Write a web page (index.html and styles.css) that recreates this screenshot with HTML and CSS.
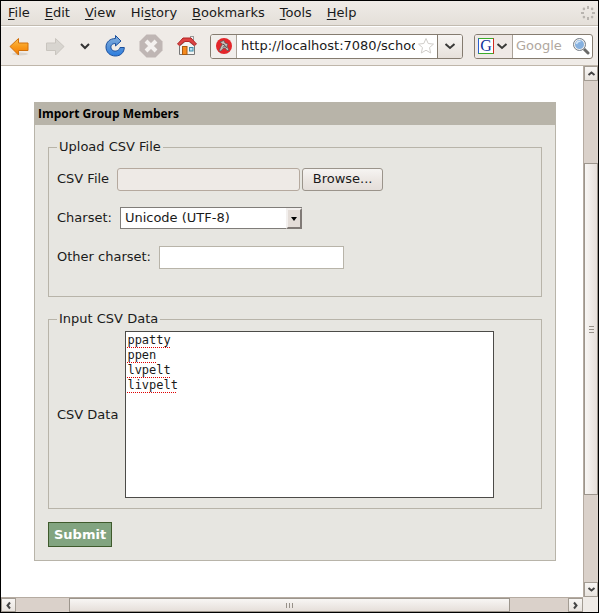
FILE: index.html
```html
<!DOCTYPE html>
<html lang="en">
<head>
<meta charset="utf-8">
<title>Import Group Members</title>
<link rel="stylesheet" href="styles.css">
</head>
<body>
<div class="window">
  <nav class="menubar" aria-label="Menu">
    <a href="#"><u>F</u>ile</a>
    <a href="#"><u>E</u>dit</a>
    <a href="#"><u>V</u>iew</a>
    <a href="#">Hi<u>s</u>tory</a>
    <a href="#"><u>B</u>ookmarks</a>
    <a href="#"><u>T</u>ools</a>
    <a href="#"><u>H</u>elp</a>
    <svg class="throbber" width="16" height="16" viewBox="0 0 16 16" fill="#b8b4af">
      <rect x="7" y="1" width="2" height="3"/><rect x="7" y="12" width="2" height="3"/>
      <rect x="1" y="7" width="3" height="2"/><rect x="12" y="7" width="3" height="2"/>
      <circle cx="3.9" cy="3.9" r="1.3"/><circle cx="12.1" cy="3.9" r="1.3"/>
      <circle cx="3.9" cy="12.1" r="1.3"/><circle cx="12.1" cy="12.1" r="1.3"/>
    </svg>
  </nav>

  <div class="toolbar">
    <button class="tool" type="button" aria-label="Back">
      <svg width="24" height="24" viewBox="0 0 24 24">
        <defs><linearGradient id="or" x2="0" y2="1"><stop offset="0" stop-color="#fcc04d"/><stop offset=".5" stop-color="#f89a1c"/><stop offset="1" stop-color="#f57900"/></linearGradient></defs>
        <ellipse cx="13" cy="20" rx="8" ry="1.5" fill="#d9d4ce"/>
        <path d="M3 12.500 11.500 4.500V9h9.500v7.500h-9.500v4.500z" fill="url(#or)" stroke="#d0700c" stroke-linejoin="round"/>
      </svg>
    </button>
    <button class="tool" type="button" aria-label="Forward">
      <svg width="24" height="24" viewBox="0 0 24 24">
        <path d="M21 12.500 12.500 4.500V9H3.500v7.500h9v4.500z" fill="#d8d5d0" stroke="#c9c5bf" stroke-linejoin="round"/>
      </svg>
    </button>
    <button class="tool tool-narrow" type="button" aria-label="Recent pages">
      <svg width="12" height="12" viewBox="0 0 12 12"><path d="m2 4 4 4 4-4" fill="none" stroke="#333" stroke-width="2"/></svg>
    </button>
    <button class="tool" type="button" aria-label="Reload">
      <svg width="24" height="24" viewBox="0 0 24 24">
        <defs><linearGradient id="bl" x2="0" y2="1"><stop offset="0" stop-color="#86b0dd"/><stop offset=".5" stop-color="#5b95d8"/><stop offset="1" stop-color="#2b7de0"/></linearGradient></defs>
        <path d="M12.500 1.500 18 7l-5.500 5V9.500C9 9.500 7.500 11.500 8 14c.6 2.800 3.800 3.800 6.500 2.500 1.500-.7 2.200-1.800 2.500-3h4.300C21.200 18.500 17.500 22 12.500 22 7 22 3 18.300 3 13c0-5 4-8.500 9.500-8.500z" fill="url(#bl)" stroke="#1b4f9c" stroke-linejoin="round"/>
      </svg>
    </button>
    <button class="tool" type="button" aria-label="Stop">
      <svg width="24" height="24" viewBox="0 0 24 24">
        <path d="M7.500.500h9l7 7v9l-7 7h-9l-7-7v-9z" fill="#bfb6b4"/>
        <path d="m7 7 10 10M17 7 7 17" stroke="#f4f1ef" stroke-width="4"/>
      </svg>
    </button>
    <button class="tool" type="button" aria-label="Home">
      <svg width="24" height="24" viewBox="0 0 24 24">
        <rect x="15.500" y="2.500" width="3" height="6" fill="#eee" stroke="#999"/>
        <path d="M4.500 12v8.500h15V12L12 6z" fill="#f4f4f2" stroke="#777"/>
        <rect x="7.500" y="12.500" width="4.500" height="8" fill="#f58a1d" stroke="#a85a10"/>
        <rect x="14.500" y="13.500" width="3.500" height="3.500" fill="#b5e0ef" stroke="#3b8aa8"/>
        <path d="M2.500 10 8 4h8l5.500 6-2 1.500L14.500 7.500h-5L4.500 11.500z" fill="#dc4343" stroke="#b32626" stroke-linejoin="round"/>
      </svg>
    </button>

    <div class="location">
      <span class="site">
        <svg width="16" height="16" viewBox="0 0 16 16">
          <circle cx="8" cy="8" r="8" fill="#e3262b"/>
          <path d="m4 4 4-1.500 1 2.500 3 1-1 2 2 4.500h-2L9 10l-2 .500L5 13H3l2-4.500L6.500 6z" fill="#c9c1bd" stroke="#555" stroke-width=".7"/>
          <path d="m7 6 2 1.500-2 2M9.500 8l1 2" fill="none" stroke="#444"/>
        </svg>
      </span>
      <input class="url" type="text" aria-label="Address" value="http://localhost:7080/school" spellcheck="false">
      <svg class="star" width="18" height="18" viewBox="0 0 18 18"><path d="m9 1.500 2.200 5 5.300.600-4 3.500 1.200 5.400L9 13.200 4.300 16l1.200-5.400-4-3.500 5.300-.600z" fill="#fff" stroke="#cfccc8" stroke-linejoin="round"/></svg>
      <button class="drop" type="button" aria-label="Show history">
        <svg width="12" height="12" viewBox="0 0 12 12"><path d="m1.500 4 4.500 4 4.500-4" fill="none" stroke="#3a3a38" stroke-width="2"/></svg>
      </button>
    </div>

    <div class="search">
      <button class="engine" type="button" aria-label="Search engine">
        <span class="google">G</span>
        <svg width="12" height="12" viewBox="0 0 12 12"><path d="m1.500 4 4.500 4 4.500-4" fill="none" stroke="#3a3a38" stroke-width="2"/></svg>
      </button>
      <input class="query" type="text" aria-label="Search" placeholder="Google">
      <button class="go" type="button" aria-label="Go">
        <svg width="18" height="18" viewBox="0 0 18 18">
          <path d="m11 11 5 5" stroke="#6a6a68" stroke-width="3" stroke-linecap="round"/>
          <circle cx="7.500" cy="7.500" r="5.500" fill="#86b1e0" stroke="#eee" stroke-width="2"/>
          <circle cx="7.500" cy="7.500" r="6" fill="none" stroke="#777f88"/>
          <path d="M4.500 7c.5-2 2-3 4-2.500" fill="none" stroke="#d5e6f7" stroke-width="1.500"/>
        </svg>
      </button>
    </div>
  </div>

  <div class="viewport">
    <main class="page">
      <form class="card">
        <h1>Import Group Members</h1>
        <div class="card-body">
          <fieldset class="upload">
            <legend>Upload CSV File</legend>
            <div class="row">
              <label for="file">CSV File</label>
              <input class="file" id="file" type="text" readonly>
              <button class="browse" type="button">Browse...</button>
            </div>
            <div class="row">
              <label for="charset">Charset:</label>
              <span class="select">
                <select id="charset"><option>Unicode (UTF-8)</option></select>
                <span class="arrow"></span>
              </span>
            </div>
            <div class="row">
              <label for="other">Other charset:</label>
              <input class="other" id="other" type="text">
            </div>
          </fieldset>
          <fieldset class="data">
            <legend>Input CSV Data</legend>
            <div class="row">
              <label for="csv">CSV Data</label>
              <textarea id="csv" spellcheck="false">ppatty
ppen
lvpelt
livpelt</textarea>
            </div>
          </fieldset>
          <button class="submit" type="submit">Submit</button>
        </div>
      </form>
    </main>
    <div class="bar vertical">
      <button type="button" aria-label="Scroll up"><svg width="9" height="9" viewBox="0 0 9 9"><path d="M1.500 6 4.500 3.500 7.500 6"/></svg></button>
      <span class="before"></span>
      <span class="thumb"><i></i><i></i><i></i></span>
      <span class="after"></span>
      <button type="button" aria-label="Scroll down"><svg width="9" height="9" viewBox="0 0 9 9"><path d="M1.500 3 4.500 5.500 7.500 3"/></svg></button>
    </div>
    <div class="bar horizontal">
      <button type="button" aria-label="Scroll left"><svg width="9" height="9" viewBox="0 0 9 9"><path d="M6 1.500 3.500 4.500 6 7.500"/></svg></button>
      <span class="before"></span>
      <span class="thumb"><i></i><i></i><i></i></span>
      <span class="after"></span>
      <button type="button" aria-label="Scroll right"><svg width="9" height="9" viewBox="0 0 9 9"><path d="M3 1.500 5.500 4.500 3 7.500"/></svg></button>
    </div>
  </div>
</div>
</body>
</html>
```
FILE: styles.css
```css
* {
  box-sizing: border-box;
}

body {
  margin: 0;
  color: #1a1a1a;
  background: #efebe7;
}

body,
button,
input,
select {
  font: 13px/16px "DejaVu Sans", sans-serif;
}

button,
input,
select,
textarea {
  margin: 0;
  padding: 0;
  border: 0;
  border-radius: 0;
  color: inherit;
  outline: 0;
}

svg {
  display: block;
  flex: none;
}

.window {
  display: flex;
  flex-direction: column;
  min-height: 100vh;
  border: 1px solid #000;
}

/* Menu bar */
.menubar {
  display: flex;
  gap: 1px;
  align-items: center;
  height: 25px;
  border-bottom: 1px solid #c2bbb0;
  background: linear-gradient(#efebe7, #e4dfd9);
}

.menubar a {
  padding: 0 7px;
  color: inherit;
  text-decoration: none;
}

.menubar u {
  text-decoration-skip-ink: none;
  text-underline-offset: 2px;
}

.throbber {
  margin-left: auto;
  margin-right: 2px;
}

/* Toolbar */
.toolbar {
  display: flex;
  align-items: center;
  height: 40px;
  padding-right: 5px;
  border-top: 1px solid #fff;
  border-bottom: 1px solid #bfb6aa;
}

.tool {
  display: flex;
  flex: none;
  align-items: center;
  justify-content: center;
  width: 36px;
  height: 32px;
  background: none;
}

.tool-narrow {
  width: 24px;
}

.location,
.search {
  display: flex;
  align-items: center;
  height: 25px;
  border: 1px solid #857c70;
  border-radius: 3px;
  background: #fff;
  overflow: hidden;
}

.location {
  flex: 1;
  min-width: 0;
  margin-left: 5px;
}

.site {
  display: flex;
  flex: none;
  align-items: center;
  justify-content: center;
  width: 26px;
  height: 23px;
  border-right: 1px solid #aaa298;
  background: #f1eeeb;
}

.url {
  flex: 1;
  min-width: 0;
  margin: 0 2px 0 4px;
}

.drop {
  display: flex;
  align-items: center;
  justify-content: center;
  width: 25px;
  height: 23px;
  margin-left: 2px;
  border-left: 1px solid #857c70;
  background: linear-gradient(#f8f6f4, #e6e0da);
}

.search {
  flex: none;
  width: 119px;
  margin-left: 11px;
}

.engine {
  display: flex;
  flex: none;
  gap: 2px;
  align-items: center;
  width: 38px;
  height: 23px;
  padding-left: 3px;
  border-right: 1px solid #aaa298;
  background: #efe9e6;
}

.google {
  width: 16px;
  height: 16px;
  border: 1px solid;
  border-color: #3bab2a #d02a20 #3bab2a #2a5fd0;
  background: #fff;
  color: #10339a;
  font: 16px/14px "Liberation Serif", serif;
  text-align: center;
}

.query {
  flex: 1;
  min-width: 0;
  margin-left: 3px;
}

.query::placeholder {
  color: #b0a79e;
}

.go {
  margin-right: 2px;
  background: none;
}

/* Page area with its scroll bars */
.viewport {
  display: grid;
  flex: 1;
  grid-template-columns: minmax(0, 1fr) 15px;
  grid-template-rows: 1fr 15px;
}

.page {
  padding: 36px 27px 36px 33px;
  background: #fff;
}

.card {
  border: 1px solid #b8b4a9;
  background: #e7e6e1;
}

h1 {
  margin: 0;
  padding: 3px;
  background: #b8b4a9;
  color: #000;
  font: bold 12px/16px "Open Sans", sans-serif;
}

.card-body {
  padding: 14px 13px 13px;
}

fieldset {
  min-width: 0;
  margin: 0 0 14px;
  padding: 0 8px;
  border: 1px solid #b8b4a9;
}

legend {
  padding: 0 2px;
}

.row {
  display: flex;
  gap: 7px;
  align-items: center;
  min-height: 24px;
}

.upload {
  padding-top: 12px;
  padding-bottom: 27px;
}

.upload .row {
  gap: 8px;
}

.upload .row + .row {
  margin-top: 15px;
}

.data {
  margin-bottom: 13px;
  padding-top: 4px;
  padding-bottom: 10px;
}

.file {
  width: 183px;
  height: 23px;
  border: 1px solid #b5a99e;
  border-radius: 3px;
  background: #eeeae6;
}

.browse {
  width: 81px;
  height: 23px;
  margin-left: -6px;
  border: 1px solid #9b948b;
  border-radius: 3px;
  background: linear-gradient(#f6f4f2, #ece7e3 50%, #e4deda);
}

.select {
  position: relative;
  width: 182px;
  height: 22px;
}

.select select {
  width: 100%;
  height: 100%;
  padding: 0 20px 0 4px;
  border: 1px solid #807d79;
  background: #fff;
  appearance: none;
}

.arrow {
  position: absolute;
  top: 1px;
  right: 0;
  display: flex;
  align-items: center;
  justify-content: center;
  width: 16px;
  height: 21px;
  border: 2px solid;
  border-color: #f3f0ee #807a76 #807a76 #f3f0ee;
  background: #e4ddd8;
  pointer-events: none;
}

.arrow::before {
  border: 3px solid transparent;
  border-top: 4px solid #000;
  border-bottom: 0;
  content: "";
}

.other {
  width: 185px;
  height: 23px;
  border: 1px solid #b8b4a9;
  background: #fff;
}

textarea {
  width: 369px;
  height: 167px;
  padding: 1px;
  border: 1px solid #4c4b48;
  background: #fff;
  font: 12px/15px "DejaVu Sans Mono", monospace;
  text-decoration: underline dotted #e00000 1px;
  text-decoration-skip-ink: none;
  text-underline-offset: 3px;
  resize: none;
}

.submit {
  display: block;
  height: 25px;
  padding: 0 5px;
  border: 1px solid #3f5a2c;
  background: #82a480;
  color: #fff;
  font-weight: bold;
}

/* Scroll bars */
.bar {
  display: flex;
  background: #dad1ca;
}

.vertical {
  flex-direction: column;
  border-left: 1px solid #b5aba1;
}

.horizontal {
  border-top: 1px solid #b5aba1;
}

.bar button {
  display: flex;
  flex: none;
  align-items: center;
  justify-content: center;
  width: 15px;
  height: 15px;
  border: 1px solid #a39c93;
  background: linear-gradient(#f8f6f4, #e8e3de);
}

.vertical button {
  width: 14px;
}

.horizontal button {
  height: 14px;
}

.bar path {
  fill: none;
  stroke: #444;
  stroke-width: 2;
}

.thumb {
  display: flex;
  gap: 2px;
  align-items: center;
  justify-content: center;
  border: 1px solid #9c958c;
  background: linear-gradient(#f8f6f4, #e6dfda);
}

.vertical .thumb {
  flex: 332;
  flex-direction: column;
  background: linear-gradient(90deg, #f8f6f4, #e6dfda);
}

.vertical .before {
  flex: 82;
}

.vertical .after {
  flex: 87;
}

.horizontal .thumb {
  flex: 441;
}

.horizontal .before {
  flex: 53;
}

.horizontal .after {
  flex: 58;
}

.thumb i {
  width: 1px;
  height: 5px;
  background: #969088;
}

.vertical i {
  width: 5px;
  height: 1px;
}
```
